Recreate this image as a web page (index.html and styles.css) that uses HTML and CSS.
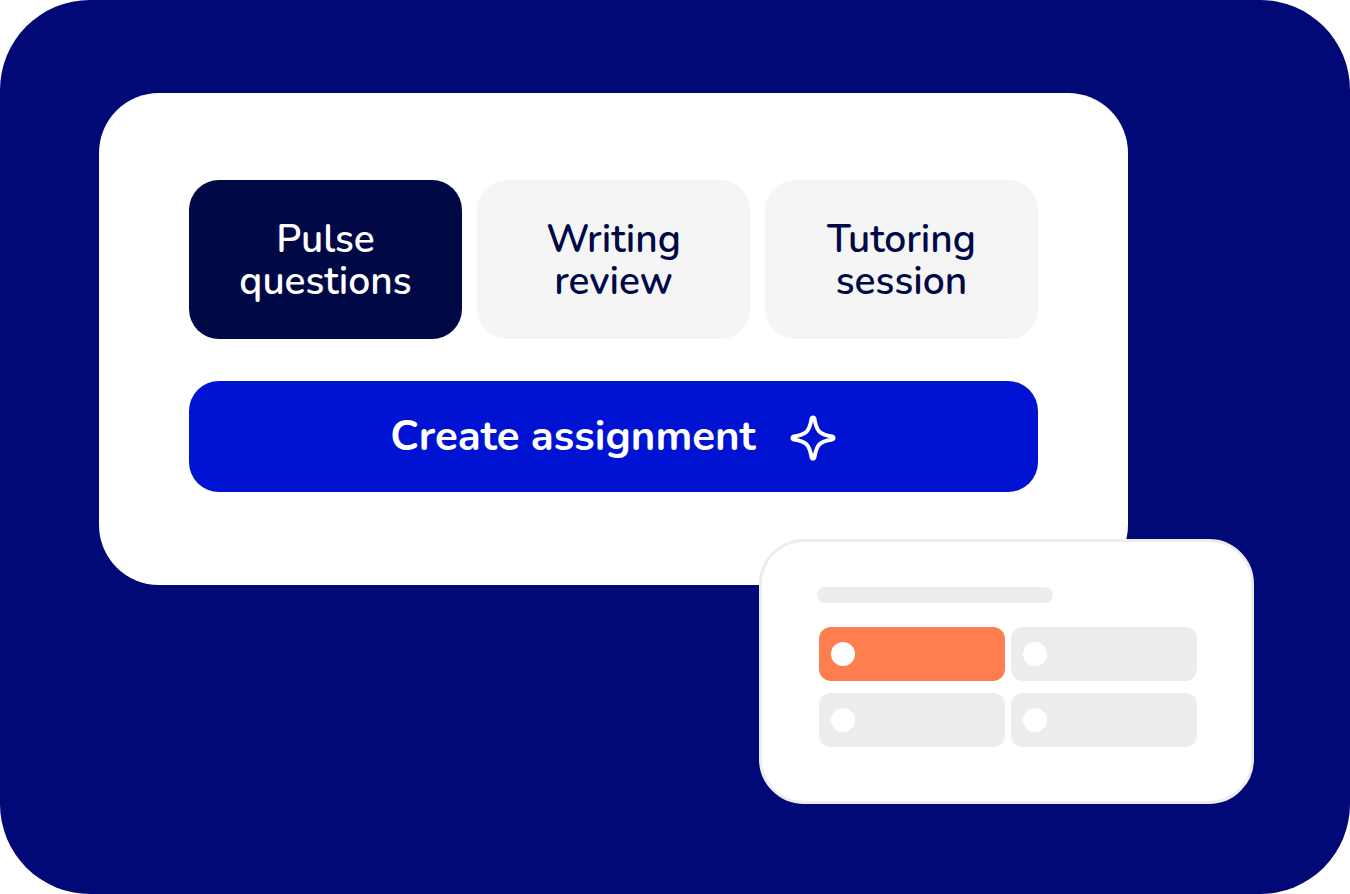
FILE: index.html
```html
<!DOCTYPE html>
<html lang="en">
  <head>
    <meta charset="UTF-8" />
    <meta name="viewport" content="width=device-width, initial-scale=1.0" />
    <title>Create assignment</title>
    <link rel="stylesheet" href="styles.css">
  </head>
  <body>
    <main class="stage">
      <!-- Assignment builder -->
      <section class="builder">
        <div class="type-list">
          <button type="button" class="type-button active">Pulse<br>questions</button>
          <button type="button" class="type-button">Writing<br>review</button>
          <button type="button" class="type-button">Tutoring<br>session</button>
        </div>
        <button type="button" class="create-button">
          <span>Create assignment</span>
          <svg class="sparkle" viewBox="0 -1 48 48" aria-hidden="true">
            <path d="M24 3.5 C24.8 3.5 25.3 4 25.5 5 C27.7 17.5 30.5 20.3 43 22.5 C44 22.7 44.5 23.2 44.5 24 C44.5 24.8 44 25.3 43 25.5 C30.5 27.7 27.7 30.5 25.5 43 C25.3 44 24.8 44.5 24 44.5 C23.2 44.5 22.7 44 22.5 43 C20.3 30.5 17.5 27.7 5 25.5 C4 25.3 3.5 24.8 3.5 24 C3.5 23.2 4 22.7 5 22.5 C17.5 20.3 20.3 17.5 22.5 5 C22.7 4 23.2 3.5 24 3.5 Z" />
          </svg>
        </button>
      </section>

      <!-- Question preview -->
      <section class="preview">
        <div class="question-line"></div>
        <div class="option-grid">
          <label class="option selected"><input type="radio" name="answer" aria-label="Answer 1" checked></label>
          <label class="option"><input type="radio" name="answer" aria-label="Answer 2"></label>
          <label class="option"><input type="radio" name="answer" aria-label="Answer 3"></label>
          <label class="option"><input type="radio" name="answer" aria-label="Answer 4"></label>
        </div>
      </section>
    </main>
  </body>
</html>
```
FILE: styles.css
```css
* {
  margin: 0;
  padding: 0;
  box-sizing: border-box;
}

body {
  font-family: Nunito, "Noto Sans", sans-serif;
  background: white;
}

.stage {
  min-height: 100vh;
  display: flex;
  flex-direction: column;
  padding: 93px 96px 90px 99px;
  background: #000975;
  border-radius: 90px;
}

/* Assignment builder */
.builder {
  margin-right: 126px;
  padding: 87px 90px 93px;
  background: white;
  border-radius: 60px;
}

.type-list {
  display: grid;
  grid-template-columns: repeat(3, 1fr);
  gap: 15px;
  margin-bottom: 42px;
}

.type-button,
.create-button {
  border: none;
  border-radius: 30px;
  font-family: inherit;
  cursor: pointer;
}

.type-button {
  padding: 39px 12px 36px;
  background: #f5f5f5;
  color: #000846;
  font-size: 39px;
  font-weight: 600;
  line-height: 42px;
}

.type-button.active {
  background: #000846;
  color: white;
}

.create-button {
  width: 100%;
  min-height: 111px;
  display: flex;
  align-items: center;
  justify-content: center;
  gap: 33px;
  background: #0013d3;
  color: white;
  font-size: 42px;
  font-weight: 700;
  line-height: 48px;
}

.sparkle {
  width: 48px;
  height: 48px;
  fill: none;
  stroke: white;
  stroke-width: 4;
  stroke-linejoin: round;
}

/* Question preview */
.preview {
  width: 100%;
  max-width: 495px;
  align-self: flex-end;
  margin-top: -46px;
  padding: 45px 54px 54px 55px;
  background: white;
  border: 3px solid #ecedef;
  border-radius: 45px;
}

.question-line {
  width: 236px;
  height: 16px;
  margin-bottom: 24px;
  background: #ecedef;
  border-radius: 8px;
}

.option-grid {
  display: grid;
  grid-template-columns: 1fr 1fr;
  gap: 12px 6px;
  padding-left: 2px;
}

.option {
  display: flex;
  align-items: center;
  height: 54px;
  padding: 0 12px;
  background: #ecedef;
  border-radius: 12px;
  cursor: pointer;
}

.option.selected {
  background: #ff7e50;
}

.option input {
  appearance: none;
  width: 24px;
  height: 24px;
  background: white;
  border-radius: 50%;
}
```
